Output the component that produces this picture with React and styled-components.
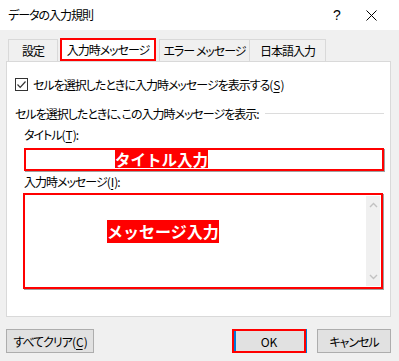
import React from 'react'
import styled, { createGlobalStyle } from 'styled-components'

const GlobalStyle = createGlobalStyle`
  html, body {
    margin: 0;
    padding: 0;
    background: #f0f0f0;
  }
  body {
    font-family: "Noto Sans CJK JP", "Noto Sans", sans-serif;
    font-size: 12px;
    letter-spacing: -1px;
    color: #000;
    font-feature-settings: "palt";
  }
`

const Dialog = styled.div`
  width: 399px;
  height: 361px;
  display: flex;
  flex-direction: column;
  background: #f0f0f0;
  overflow: hidden;
`

const TitleBar = styled.div`
  height: 30px;
  background: #fff;
  display: flex;
  align-items: center;
  padding-left: 8px;
  line-height: 1;
`

const TitleText = styled.span`
  flex: 1;
  font-size: 12px;
`

const TitleButton = styled.span`
  width: ${p => p.$w}px;
  display: flex;
  justify-content: center;
  align-items: center;
  font-family: "Liberation Sans", sans-serif;
  font-size: 14px;
  letter-spacing: 0;
`

const Body = styled.div`
  padding: 8px 8px 0 6px;
  display: flex;
  flex-direction: column;
`

const TabStrip = styled.div`
  display: flex;
  align-items: flex-end;
  height: 23px;
  margin-left: 2px;
`

const Tab = styled.div`
  box-sizing: border-box;
  height: ${p => (p.$active ? 23 : 22)}px;
  width: ${p => p.$w}px;
  margin-left: ${p => p.$ml || 0}px;
  display: flex;
  align-items: center;
  justify-content: center;
  background: ${p => (p.$active ? '#fff' : '#f0f0f0')};
  border: ${p => (p.$active ? '2px solid #ff0000' : '1px solid #d9d9d9')};
  border-bottom: ${p => (p.$active ? '2px solid #ff0000' : 'none')};
  white-space: nowrap;
  position: relative;
  z-index: ${p => (p.$active ? 2 : 1)};
`

const Panel = styled.div`
  box-sizing: border-box;
  height: 256px;
  background: #fff;
  border: 1px solid #d9d9d9;
  display: flex;
  flex-direction: column;
  padding: 14px 6px 0 8px;
`

const CheckRow = styled.label`
  display: flex;
  align-items: center;
  height: 16px;
  gap: 5px;
`

const CheckBox = styled.span`
  box-sizing: border-box;
  width: 13px;
  height: 13px;
  border: 1px solid #333;
  display: flex;
  align-items: center;
  justify-content: center;
  background: #fff;
`

const GroupLabel = styled.div`
  display: flex;
  align-items: center;
  height: 16px;
  margin-top: 13px;
  gap: 6px;
  white-space: nowrap;
  &::after {
    content: '';
    flex: 1;
    height: 1px;
    background: #dcdcdc;
  }
`

const FieldLabel = styled.div`
  height: 16px;
  line-height: 16px;
  margin-top: ${p => p.$mt}px;
  margin-left: 9px;
`

const Underline = styled.span`
  text-decoration: underline;
  text-underline-offset: 2px;
  margin: 0 1px;
`

const InputBox = styled.div`
  box-sizing: border-box;
  margin-top: ${p => p.$mt}px;
  margin-left: ${p => p.$ml}px;
  margin-right: ${p => p.$mr}px;
  height: ${p => p.$h}px;
  border: 2px solid #ff0000;
  background: #fff;
  box-shadow: 1px 1px 0 #a0a0a0;
  display: flex;
  position: relative;
`

const Highlight = styled.span`
  background: #ff0000;
  color: #fff;
  font-weight: bold;
  font-size: ${p => p.$fs}px;
  line-height: ${p => p.$h}px;
  height: ${p => p.$h}px;
  letter-spacing: 0;
  font-feature-settings: normal;
  white-space: nowrap;
`

const TitleInputInner = styled.div`
  flex: 1;
  padding-left: 89px;
  display: flex;
  align-items: flex-start;
`

const MessageInner = styled.div`
  flex: 1;
  padding: 25px 0 0 82px;
  display: flex;
  align-items: flex-start;
`

const ScrollBar = styled.div`
  width: 14px;
  margin: 1px 1px 1px 0;
  background: #f0f0f0;
  display: flex;
  flex-direction: column;
  justify-content: space-between;
  align-items: center;
  padding: 6px 0;
`

const Footer = styled.div`
  display: flex;
  align-items: center;
  margin-top: 12px;
`

const Button = styled.button`
  box-sizing: border-box;
  font: inherit;
  font-size: 12px;
  letter-spacing: -1px;
  color: #000;
  height: 24px;
  width: ${p => p.$w}px;
  margin-left: ${p => p.$ml || 0}px;
  background: #e1e1e1;
  border: 1px solid #adadad;
  padding: 0;
  white-space: nowrap;
`

const OkButton = styled(Button)`
  border: 2px solid #ff0000;
  letter-spacing: 0;
  box-shadow: inset 2px 0 0 #0078d7, 1px 0 0 #0078d7;
`

const Chevron = ({ down }) => (
  <svg width="9" height="6" viewBox="0 0 9 6">
    <path
      d={down ? 'M1 1 L4.5 4.5 L8 1' : 'M1 5 L4.5 1.5 L8 5'}
      fill="none"
      stroke="#c2c2c2"
      strokeWidth="1.4"
    />
  </svg>
)

export default function App() {
  return (
    <>
      <GlobalStyle />
      <Dialog>
        <TitleBar>
          <TitleText>データの入力規則</TitleText>
          <TitleButton $w={12}>?</TitleButton>
          <TitleButton $w={56}>
            <svg width="11" height="11" viewBox="0 0 11 11">
              <path d="M0.5 0.5 L10.5 10.5 M10.5 0.5 L0.5 10.5" stroke="#000" strokeWidth="1" />
            </svg>
          </TitleButton>
        </TitleBar>
        <Body>
          <TabStrip>
            <Tab $w={50}>設定</Tab>
            <Tab $w={96} $ml={2} $active>入力時メッセージ</Tab>
            <Tab $w={91} $ml={3}>エラー メッセージ</Tab>
            <Tab $w={77} $ml={-1}>日本語入力</Tab>
          </TabStrip>
          <Panel>
            <CheckRow>
              <CheckBox>
                <svg width="11" height="11" viewBox="0 0 11 11">
                  <path d="M1.5 5.5 L4.2 8.3 L9.5 2.5" fill="none" stroke="#333" strokeWidth="1.2" />
                </svg>
              </CheckBox>
              <span>セルを選択したときに入力時メッセージを表示する(<Underline>S</Underline>)</span>
            </CheckRow>
            <GroupLabel>セルを選択したときに、この入力時メッセージを表示:</GroupLabel>
            <FieldLabel $mt={6}>タイトル(<Underline>T</Underline>):</FieldLabel>
            <InputBox $mt={5} $h={23} $ml={9} $mr={0}>
              <TitleInputInner>
                <Highlight $h={18} $fs={15.5}>タイトル入力</Highlight>
              </TitleInputInner>
            </InputBox>
            <FieldLabel $mt={3}>入力時メッセージ(<Underline>I</Underline>):</FieldLabel>
            <InputBox $mt={3} $h={96} $ml={8} $mr={1}>
              <MessageInner>
                <Highlight $h={23} $fs={16}>メッセージ入力</Highlight>
              </MessageInner>
              <ScrollBar>
                <Chevron />
                <Chevron down />
              </ScrollBar>
            </InputBox>
          </Panel>
          <Footer>
            <Button $w={88}>すべてクリア(<Underline>C</Underline>)</Button>
            <OkButton $w={74} $ml={138}>OK</OkButton>
            <Button $w={74} $ml={11}>キャンセル</Button>
          </Footer>
        </Body>
      </Dialog>
    </>
  )
}
